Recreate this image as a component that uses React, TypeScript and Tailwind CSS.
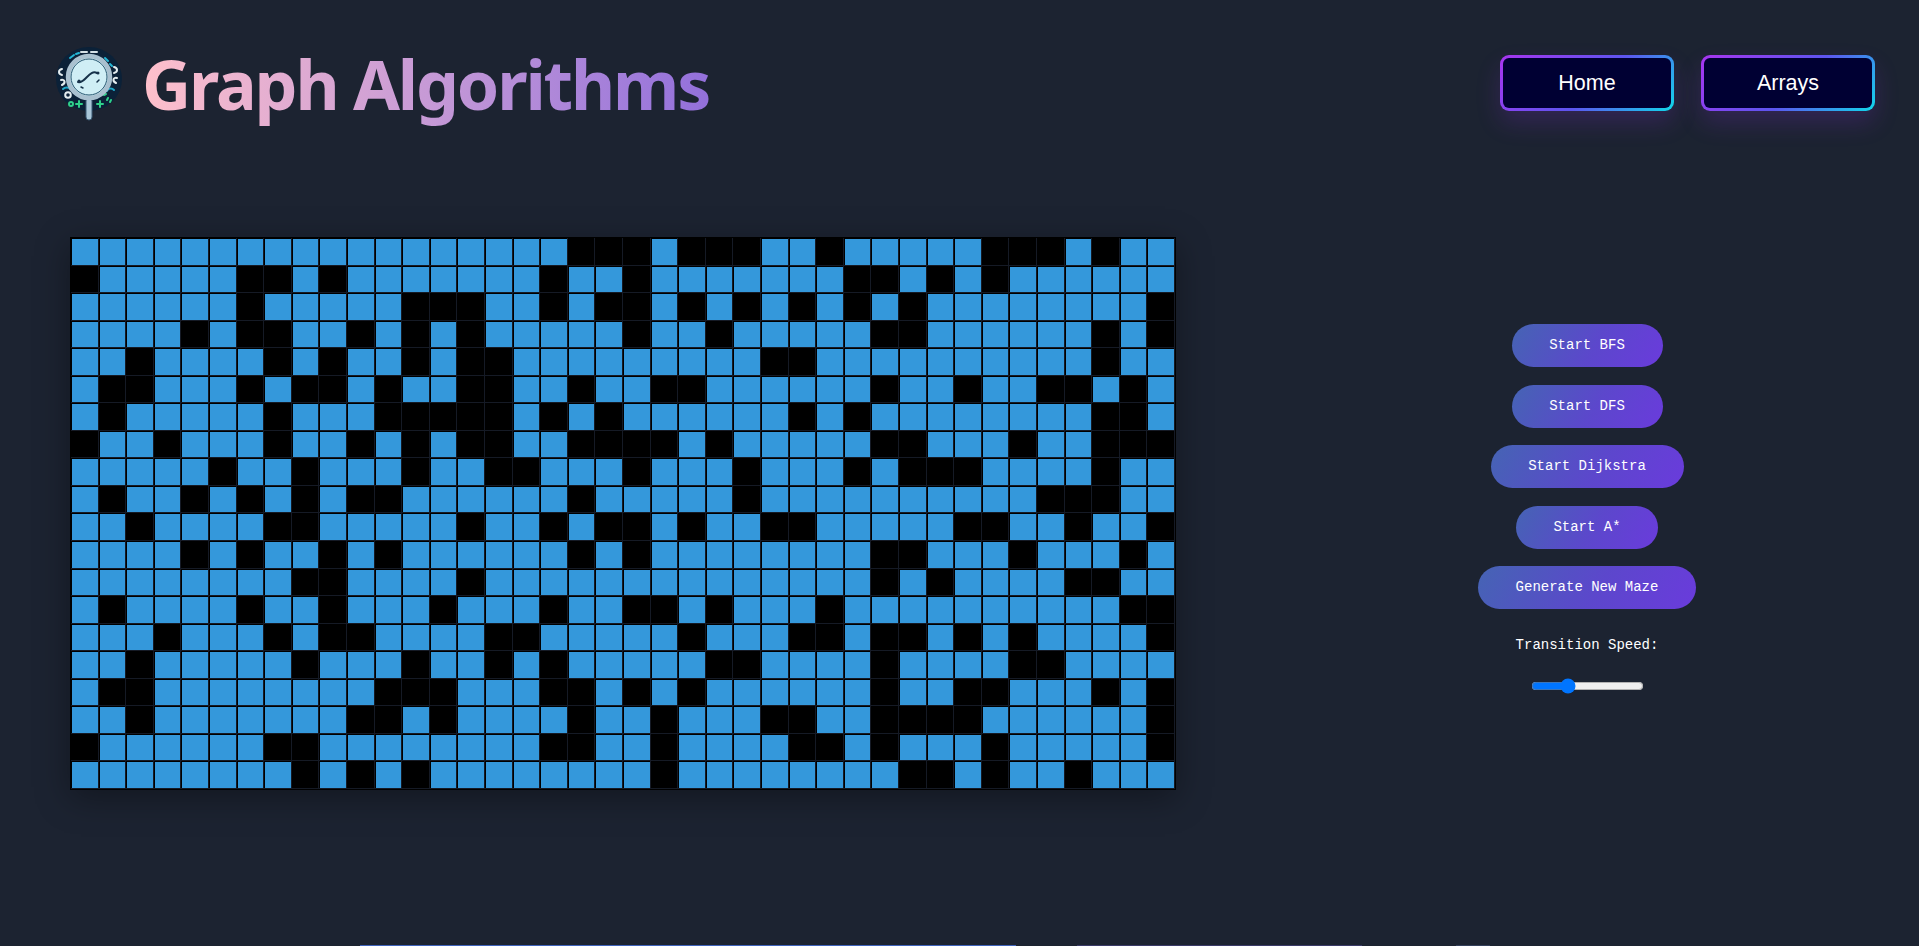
import { useState } from 'react'

// 1 = open cell, 0 = wall
const MAZE = [
  '1111111111 1111111100 0100011011 1110001011',
  '0111110010 1111111011 0111111100 1010111111',
  '1111110111 1100011010 0101010101 0111111110',
  '1111010011 0101011111 0110111110 0111111010',
  '1101111010 1101001111 1111100111 1111111011',
  '1001110100 1011001101 1001111110 1101100101',
  '1011111011 1000001010 1111110101 1111111001',
  '0110111011 0101001100 0010111110 0111011000',
  '1111101101 1101100111 0111011101 0001111011',
  '1011010101 0011111101 1111011111 1111100011',
  '1101111001 1111011010 0101100111 1100110110',
  '1111010110 1011111101 0111111110 0111011101',
  '1111111100 1111011111 1111111110 1011110011',
  '1011110110 1110111011 0010111011 1111111100',
  '1110111010 0111100111 1101110010 0101011110',
  '1101111101 1101101011 1110011110 1111001111',
  '1001111111 1000111001 0101111110 1100111010',
  '1101111111 0010111101 1011100110 0001111110',
  '0111111001 1111111001 1011110010 1110111110',
  '1111111101 0101111111 1011111111 0010110111',
].map((row) => row.replace(/ /g, ''))

const ALGOS = ['Start BFS', 'Start DFS', 'Start Dijkstra', 'Start A*', 'Generate New Maze']

function Logo() {
  return (
    <svg viewBox="0 0 80 85" className="w-[80px] h-[85px] shrink-0">
      <ellipse cx="39" cy="39" rx="33" ry="32" fill="#0b2138" />
      <g fill="none" strokeWidth="2" strokeLinecap="round">
        <path d="M31 12h6M41 12h6" stroke="#d5e0e6" />
        <path d="M12 29c-4 1-4 5 0 6M11 40c4-1 5 3 1 5" stroke="#e4edf0" />
        <path d="M64 27c4 1 4 5 0 6M67 38c-4-1-5 3-1 5" stroke="#e4edf0" />
        <path d="M20 18l4-3M26 14l3-1M55 18l3 3M60 24l2 2" stroke="#23b6d6" />
        <path d="M13 49c2-2 6-2 7 0M64 50c-2-2-6-2-7 1" stroke="#1fa8c9" />
        <circle cx="18" cy="55" r="2.800" stroke="#e4edf0" />
        <circle cx="21" cy="64" r="2" stroke="#2fd08a" />
        <path d="M26 64h6M29 61v6M47 64h6M50 61v6" stroke="#2fd08a" />
        <path d="M57 60l1-2M60 62l1-2M54 55l2-1" stroke="#2fd08a" />
      </g>
      <rect x="36" y="58" width="6" height="22" rx="3" fill="#a9c6d8" stroke="#3a5a74" />
      <circle cx="39" cy="37" r="21" fill="#cfeef5" stroke="#a9c0cf" strokeWidth="4.500" />
      <circle cx="39" cy="37" r="18" fill="none" stroke="#2a5872" strokeWidth="1" />
      <path d="M28 42c4 1 6-2 9-5s6-6 10-4" fill="none" stroke="#17324a" strokeWidth="2" strokeLinecap="round" />
      <path d="M31 47l2 1M47 42l2-2" fill="none" stroke="#17324a" strokeWidth="1.500" strokeLinecap="round" />
      <circle cx="29" cy="41" r="1.500" fill="#17324a" />
      <circle cx="48" cy="33" r="1.500" fill="#17324a" />
    </svg>
  )
}

function NavButton({ label }: { label: string }) {
  return (
    <button className="w-[174px] h-[56px] p-[3px] rounded-[9px] bg-[linear-gradient(135deg,#a835f0,#5d55f0_55%,#10d8ea)] shadow-[0_12px_24px_rgba(138,43,226,0.2)]">
      <span className="flex items-center justify-center w-full h-full rounded-[6px] bg-[#000033] text-white text-[21.500px] font-['Liberation_Sans',sans-serif]">
        {label}
      </span>
    </button>
  )
}

function Grid() {
  return (
    <div className="grid grid-cols-[repeat(40,1fr)] grid-rows-[repeat(20,1fr)] w-[1106px] h-[553px] shrink-0 border border-black bg-black shadow-[0_8px_32px_rgba(0,0,0,0.35)]">
      {MAZE.map((row, r) =>
        row.split('').map((c, i) => (
          <div key={`${r}-${i}`} className="pl-px pt-px bg-black border-r border-b border-[#151a25]">
            <div className={c === '1' ? 'w-full h-full bg-[#3498db]' : 'w-full h-full bg-black'} />
          </div>
        )),
      )}
    </div>
  )
}

export default function App() {
  const [speed, setSpeed] = useState(30)

  return (
    <div className="h-[946px] overflow-hidden flex flex-col bg-[#1c2331]">
      <header className="flex items-start justify-between pt-[40px] pl-[50px] pr-[44px]">
        <div className="flex items-start gap-[12px]">
          <Logo />
          <h1 className="mt-[6px] pb-[14px] text-[68px] leading-[76px] font-bold tracking-[-2.150px] font-['Noto_Sans',sans-serif] bg-gradient-to-r from-[#ffc0cb] to-[#9370db] bg-clip-text text-transparent">
            Graph Algorithms
          </h1>
        </div>
        <nav className="flex gap-[27px] pt-[15px]">
          <NavButton label="Home" />
          <NavButton label="Arrays" />
        </nav>
      </header>

      <main className="flex items-start mt-[101px] pl-[70px]">
        <Grid />
        <div className="flex flex-col items-center w-[240px] ml-[291px] pt-[87px] gap-[17.500px] font-['Liberation_Mono',monospace] text-[14px] text-white">
          {ALGOS.map((a) => (
            <button
              key={a}
              className="h-[43px] px-[37.700px] rounded-full bg-[linear-gradient(120deg,#4564b4,#5c47cc_55%,#6a3bdc)] whitespace-nowrap"
            >
              {a}
            </button>
          ))}
          <label className="mt-[8px] leading-[20px]">Transition Speed:</label>
          <input
            type="range"
            min={0}
            max={100}
            value={speed}
            onChange={(e) => setSpeed(Number(e.target.value))}
            className="w-[113px] mt-[6px]"
          />
        </div>
      </main>

      <div className="mt-auto flex h-px">
        <div className="ml-[360px] w-[656px] bg-[#3f63bb]" />
        <div className="ml-[61px] w-[285px] bg-[#3a3a68]" />
        <div className="ml-[94px] w-[34px] bg-[#34405c]" />
      </div>
    </div>
  )
}
